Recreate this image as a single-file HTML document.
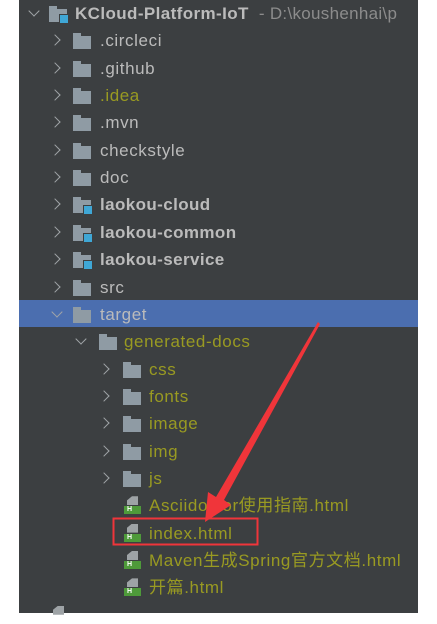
<!DOCTYPE html>
<html><head><meta charset="utf-8"><style>
body{margin:0;width:437px;height:613px;background:#fff;overflow:hidden;position:relative;font-family:"Liberation Sans","Noto Sans CJK SC",sans-serif}
#p{position:absolute;left:19px;top:0;width:399px;height:613px;background:#3c3f41}
.sel{position:absolute;left:19px;width:399px;top:300px;height:27px;background:#4b6eaf}
.r{position:absolute;height:27px;line-height:27px;font-size:17px;letter-spacing:0.6px;color:#bbbbbb;white-space:nowrap}
.o{color:#999a22}
.b{font-weight:bold;letter-spacing:0.4px}
.ar{position:absolute;width:7px;height:7px;border-right:1.6px solid #a0a4a8;border-bottom:1.6px solid #a0a4a8}
.rt{transform:rotate(-45deg)}
.dn{transform:rotate(45deg)}
.f{position:absolute;width:18px;height:13px;background:#8f9ba4}
.f:before{content:"";position:absolute;left:0;top:-3px;width:8px;height:3px;background:#8f9ba4}
.mod:after{content:"";position:absolute;right:-2px;bottom:-2px;width:8px;height:8px;background:#3fa7d6;border:1px solid #3c3f41}
.h{position:absolute;width:16px;height:18px}
.h i{position:absolute;left:3px;top:0;width:11px;height:9px;background:#9ea3a6;clip-path:polygon(45% 0,100% 0,100% 100%,0 100%,0 45%)}
.h b{position:absolute;left:0;top:10px;width:17px;height:8px;background:#4e9a3a;color:#fff;font-size:7px;line-height:8px;padding-left:3px;box-sizing:border-box;font-weight:bold}
</style></head><body>
<div id="p"></div>
<div class="sel"></div>
<div id="t"></div>
<svg style="position:absolute;left:0;top:0" width="437" height="613">
<rect x="113.5" y="518.5" width="144" height="26" fill="none" stroke="#f0353a" stroke-width="2"/>
<polygon points="318,322 320,324 224,500 231,505 205,522 208,492 216,497" fill="#f0353a"/>
</svg>
<script>
var rows=[
[0,"KCloud-Platform-IoT",'m b',"  - D:\\koushenhai\\p"],
[1,".circleci",''],[1,".github",''],[1,".idea",'o'],[1,".mvn",''],[1,"checkstyle",''],[1,"doc",''],
[1,"laokou-cloud",'m b'],[1,"laokou-common",'m b'],[1,"laokou-service",'m b'],[1,"src",''],
[1,"target",'d'],[2,"generated-docs",'o d'],[3,"css",'o'],[3,"fonts",'o'],[3,"image",'o'],[3,"img",'o'],[3,"js",'o'],
[3,"Asciidoctor使用指南.html",'o h'],[3,"index.html",'o h'],[3,"Maven生成Spring官方文档.html",'o h'],[3,"开篇.html",'o h'],
[1,"",'h']];
var ax=[30,53,77,102],fx=[49,73,99,123],tx=[75,100,124,149];
var h='';
rows.forEach(function(r,i){
 var y=i*27.35,l=r[0],c=r[2];
 var tc=c.replace('m','').replace('d','').replace('h','');
 if(i==rows.length-1){h+='<div class="h" style="left:50px;top:'+(y+4)+'px"><i></i></div>';return;}
 if(c.indexOf('h')<0){
  var d=(c.indexOf('d')>=0||i==0);
  h+='<div class="ar '+(d?'dn':'rt')+'" style="left:'+(ax[l]-(d?0:2))+'px;top:'+(y+(d?7:9))+'px"></div>';
  h+='<div class="f'+(c.indexOf('m')>=0?' mod':'')+'" style="left:'+fx[l]+'px;top:'+(y+9)+'px"></div>';
  h+='<div class="r '+tc+'" style="left:'+tx[l]+'px;top:'+y+'px">'+r[1]+(r[3]?'<span style="font-weight:normal;color:#8c8c8c;white-space:pre;letter-spacing:0.3px">'+r[3]+'</span>':'')+'</div>';
 }else{
  h+='<div class="h" style="left:124px;top:'+(y+4)+'px"><i></i><b>H</b></div>';
  h+='<div class="r '+tc+'" style="left:149px;top:'+y+'px">'+r[1]+'</div>';
 }
});
document.getElementById('t').innerHTML=h;
</script>
</body></html>
